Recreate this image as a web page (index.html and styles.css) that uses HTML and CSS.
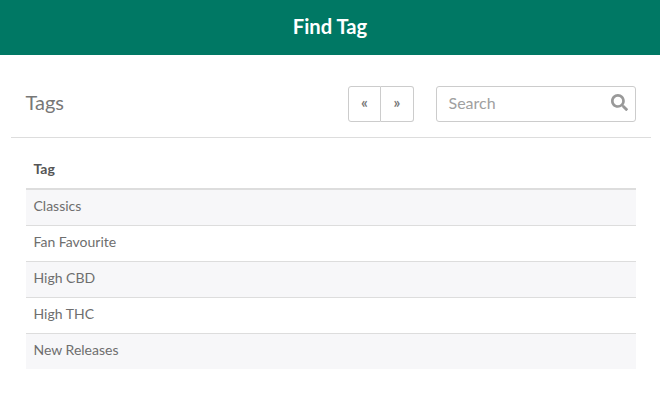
FILE: index.html
```html
<!DOCTYPE html>
<html lang="en">
<head>
<meta charset="utf-8">
<title>Find Tag</title>
<link rel="stylesheet" href="styles.css">
</head>
<body>
<header class="title-bar"><h1 class="title">Find Tag</h1></header>
<div class="toolbar">
  <h2 class="heading">Tags</h2>
  <div class="pager">
    <button class="page-btn">«</button>
    <button class="page-btn">»</button>
  </div>
  <div class="search">
    <span class="placeholder">Search</span>
    <svg class="search-icon" viewBox="0 0 512 512" width="17" height="17"><path fill="#999" d="M505 442.700L405.300 343c-4.500-4.500-10.600-7-17-7H372c27.600-35.300 44-79.700 44-128C416 93.100 322.900 0 208 0S0 93.100 0 208s93.100 208 208 208c48.300 0 92.700-16.400 128-44v16.300c0 6.400 2.500 12.500 7 17l99.700 99.700c9.400 9.400 24.600 9.400 33.900 0l28.300-28.300c9.400-9.400 9.400-24.600.1-34zM208 336c-70.700 0-128-57.200-128-128 0-70.700 57.200-128 128-128 70.700 0 128 57.200 128 128 0 70.700-57.200 128-128 128z"/></svg>
  </div>
</div>
<div class="table-wrap">
  <table class="tags">
    <thead><tr><th>Tag</th></tr></thead>
    <tbody>
      <tr><td>Classics</td></tr>
      <tr><td>Fan Favourite</td></tr>
      <tr><td>High CBD</td></tr>
      <tr><td>High THC</td></tr>
      <tr><td>New Releases</td></tr>
    </tbody>
  </table>
</div>
</body>
</html>
```
FILE: styles.css
```css
* { box-sizing: border-box; }
html, body { margin: 0; padding: 0; }
body { background: #fff; font-family: Lato, sans-serif; font-size: 14px; color: #6e6e6e; width: 660px; height: 400px; overflow: hidden; }
.title-bar { height: 55px; background: #007864; display: flex; align-items: center; justify-content: center; padding-bottom: 4px; }
.title { margin: 0; font-size: 20.2px; font-weight: 700; color: #fff; }
.toolbar { margin: 0 9px 0 11px; height: 83px; padding: 31px 15px 15px 14.500px; display: flex; align-items: flex-start; border-bottom: 1px solid #ddd; }
.heading { margin: 0; font-size: 20px; font-weight: 400; line-height: 32px; color: #777; flex: 1; }
.pager { display: flex; height: 36px; margin-right: 22px; }
.page-btn { width: 33px; height: 36px; padding: 0 0 4px; background: #fff; border: 1px solid #ccc; font-family: Lato, sans-serif; font-size: 15px; font-weight: 700; color: #777; border-radius: 0; }
.page-btn:first-child { border-radius: 3px 0 0 3px; }
.page-btn:last-child { border-left: 0; border-radius: 0 3px 3px 0; }
.search { width: 200px; height: 36px; border: 1px solid #ccc; border-radius: 3px; padding: 0 7px 0 11.500px; display: flex; align-items: center; justify-content: space-between; }
.placeholder { font-size: 16px; color: #a0a0a0; padding-bottom: 4px; }
.search-icon { margin-top: -3px; }
.table-wrap { padding: 15px 24px 0 26px; }
.tags { width: 100%; border-collapse: collapse; }
.tags th { text-align: left; height: 36px; padding: 0 8px 4px 7.500px; font-size: 14px; font-weight: 700; color: #555; border-bottom: 2px solid #ddd; }
.tags td { height: 36px; padding: 0 8px 4px 7.500px; border-top: 1px solid #ddd; }
.tags tbody tr:first-child td { border-top: 0; }
.tags tbody tr:nth-child(odd) { background: #f7f7f9; }
```
